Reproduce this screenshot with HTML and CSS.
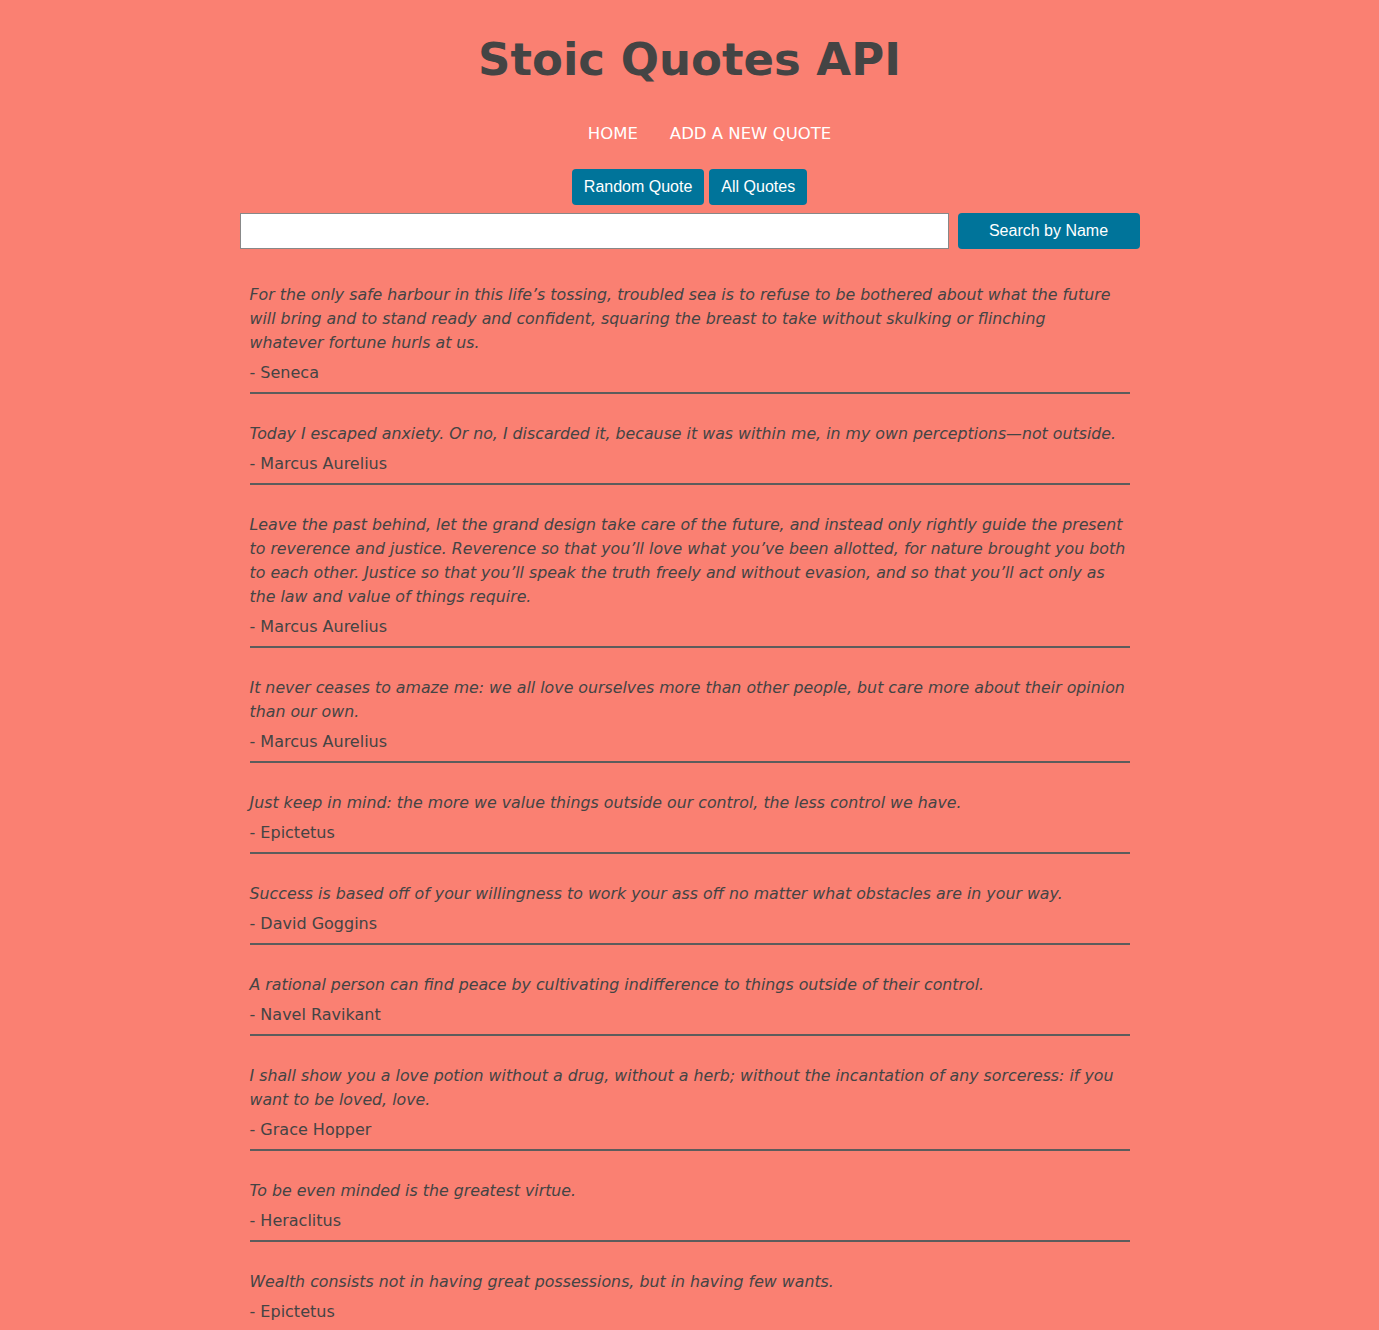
FILE: index.html
```html
<!DOCTYPE html>
<html lang="en">
<head>
<meta charset="utf-8">
<title>Stoic Quotes API</title>
<link rel="stylesheet" href="styles.css">
</head>
<body>
<header class="header">
  <h1 class="title">Stoic Quotes API</h1>
  <ul class="nav">
    <li><a class="nav-link" href="#">HOME</a></li>
    <li><a class="nav-link" href="#">ADD A NEW QUOTE</a></li>
  </ul>
</header>
<main class="container">
  <div class="actions">
    <button class="btn">Random Quote</button>
    <button class="btn">All Quotes</button>
  </div>
  <form class="search">
    <input class="search-input" type="text">
    <button class="btn btn-search" type="button">Search by Name</button>
  </form>
  <section class="quotes">
    <article class="quote">
      <p class="quote-text">For the only safe harbour in this life’s tossing, troubled sea is to refuse to be bothered about what the future will bring and to stand ready and confident, squaring the breast to take without skulking or flinching <span class="keep">whatever fortune</span> hurls at us.</p>
      <p class="quote-author">- Seneca</p>
      <hr class="rule">
    </article>
    <article class="quote">
      <p class="quote-text">Today I escaped anxiety. Or no, I discarded it, because it was within me, in my own perceptions—not outside.</p>
      <p class="quote-author">- Marcus Aurelius</p>
      <hr class="rule">
    </article>
    <article class="quote">
      <p class="quote-text">Leave the past behind, let the grand design take care of the future, and instead only rightly guide the present to reverence and justice. Reverence so that you’ll love what you’ve been allotted, for nature brought you both to each other. Justice so that you’ll speak the truth freely and without evasion, and so that you’ll act only as the law and value of things require.</p>
      <p class="quote-author">- Marcus Aurelius</p>
      <hr class="rule">
    </article>
    <article class="quote">
      <p class="quote-text">It never ceases to amaze me: we all love ourselves more than other people, but care more about their opinion than our own.</p>
      <p class="quote-author">- Marcus Aurelius</p>
      <hr class="rule">
    </article>
    <article class="quote">
      <p class="quote-text">Just keep in mind: the more we value things outside our control, the less control we have.</p>
      <p class="quote-author">- Epictetus</p>
      <hr class="rule">
    </article>
    <article class="quote">
      <p class="quote-text">Success is based off of your willingness to work your ass off no matter what obstacles are in your way.</p>
      <p class="quote-author">- David Goggins</p>
      <hr class="rule">
    </article>
    <article class="quote">
      <p class="quote-text">A rational person can find peace by cultivating indifference to things outside of their control.</p>
      <p class="quote-author">- Navel Ravikant</p>
      <hr class="rule">
    </article>
    <article class="quote">
      <p class="quote-text">I shall show you a love potion without a drug, without a herb; without the incantation of any sorceress: if you want to be loved, love.</p>
      <p class="quote-author">- Grace Hopper</p>
      <hr class="rule">
    </article>
    <article class="quote">
      <p class="quote-text">To be even minded is the greatest virtue.</p>
      <p class="quote-author">- Heraclitus</p>
      <hr class="rule">
    </article>
    <article class="quote">
      <p class="quote-text">Wealth consists not in having great possessions, but in having few wants.</p>
      <p class="quote-author">- Epictetus</p>
      <hr class="rule">
    </article>
  </section>
</main>
</body>
</html>
```
FILE: styles.css
```css
* { box-sizing: border-box; }

html, body {
  margin: 0;
  padding: 0;
  background: #fa8072;
}

body {
  font-family: "DejaVu Sans", sans-serif;
  color: #444;
}

.header {
  text-align: center;
  padding-top: 33px;
}

.title {
  margin: 0;
  font-size: 45px;
  line-height: 54px;
  font-weight: 700;
  color: #444;
}

.nav {
  list-style: none;
  margin: 37px 0 0;
  padding: 0 0 0 40px;
  display: flex;
  justify-content: center;
  gap: 32px;
}

.nav-link {
  color: #fff;
  text-decoration: none;
  font-size: 16.5px;
  line-height: 20px;
  display: block;
}

.container {
  width: 900px;
  margin: 0 auto;
}

.actions {
  display: flex;
  justify-content: center;
  gap: 5px;
  margin-top: 25px;
}

.btn {
  font-family: "Liberation Sans", Arial, sans-serif;
  font-size: 16px;
  line-height: 18px;
  color: #fff;
  background: #00749a;
  border: none;
  border-radius: 4px;
  padding: 9px 12px;
  height: 36px;
  cursor: pointer;
}

.search {
  display: flex;
  gap: 9px;
  margin-top: 8px;
}

.search-input {
  flex: 1;
  height: 36px;
  border: 1px solid #888;
  background: #fff;
  margin: 0;
}

.btn-search {
  width: 182px;
  padding: 9px 0;
}

.quotes {
  padding: 34px 10px 0;
}

.quote {
  margin-bottom: 28px;
}

.quote-text {
  margin: 0;
  font-style: italic;
  font-size: 15.8px;
  line-height: 24px;
}

.keep {
  white-space: nowrap;
}

.quote-author {
  margin: 6px 0 0;
  font-size: 16px;
  line-height: 24px;
}

.rule {
  margin: 7px 0 0;
  height: 0;
  border: none;
  border-top: 2px solid #5c5c5c;
}
```
